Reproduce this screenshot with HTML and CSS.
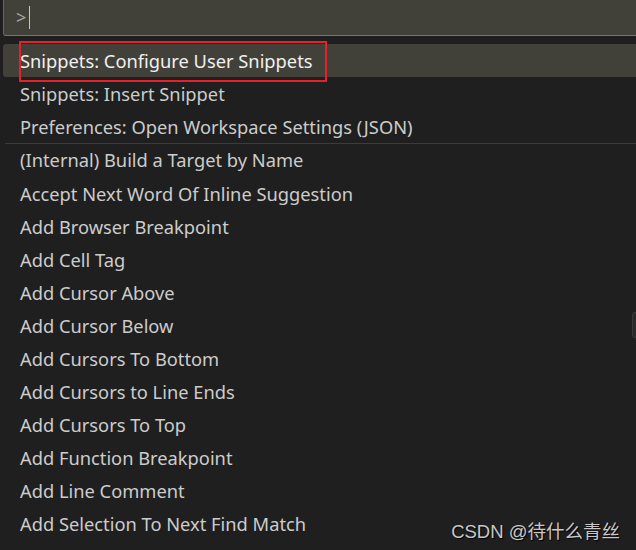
FILE: index.html
```html
<!DOCTYPE html>
<html>
<head>
<meta charset="utf-8">
<link rel="stylesheet" href="styles.css">
</head>
<body>
<div class="palette">
  <div class="input"><span class="prompt">&gt;</span><span class="caret"></span></div>
  <ul class="list">
    <li class="item active"><span class="mark">Snippets: Configure User Snippets</span></li>
    <li class="item">Snippets: Insert Snippet</li>
    <li class="item">Preferences: Open Workspace Settings (JSON)</li>
    <li class="item sep">(Internal) Build a Target by Name</li>
    <li class="item">Accept Next Word Of Inline Suggestion</li>
    <li class="item">Add Browser Breakpoint</li>
    <li class="item">Add Cell Tag</li>
    <li class="item">Add Cursor Above</li>
    <li class="item">Add Cursor Below</li>
    <li class="item">Add Cursors To Bottom</li>
    <li class="item">Add Cursors to Line Ends</li>
    <li class="item">Add Cursors To Top</li>
    <li class="item">Add Function Breakpoint</li>
    <li class="item">Add Line Comment</li>
    <li class="item">Add Selection To Next Find Match</li>
    <li class="item">Add Selection To Previous Find Match</li>
  </ul>
  <div class="scroll"></div>
</div>
<div class="watermark">CSDN @待什么青丝</div>
</body>
</html>
```
FILE: styles.css
```css
html, body {
  margin: 0;
  padding: 0;
  width: 636px;
  height: 550px;
  overflow: hidden;
  background: #1f1f1f;
  font-family: "Noto Sans", "Open Sans", sans-serif;
}
.palette {
  position: relative;
  height: 550px;
}
.input {
  margin-left: 3px;
  background: #41413a;
  border-left: 1px solid #66665c;
  border-bottom: 1px solid #76766c;
  border-bottom-left-radius: 3px;
  display: flex;
  align-items: center;
  padding-left: 12px;
  box-sizing: border-box;
  height: 36px;
}
.prompt {
  color: #a8a8a0;
  font-size: 18px;
  line-height: 22px;
  margin-top: -1px;
}
.caret {
  width: 1px;
  height: 23px;
  background: #c8c8c0;
  margin-left: 3px;
}
.list {
  list-style: none;
  margin: 8px 0 0 3px;
  padding: 0;
}
.item {
  height: 33px;
  line-height: 33px;
  padding-left: 17px;
  color: #cccccc;
  font-size: 18.3px;
  white-space: nowrap;
  box-sizing: border-box;
}
.item.active {
  background: #41413a;
  border-radius: 3px 0 0 3px;
  position: relative;
  color: #f0f0f0;
}
.mark {
  position: relative;
}
.mark::after {
  content: "";
  position: absolute;
  left: -1px;
  right: -14px;
  top: -7px;
  bottom: -9px;
  border: 2.5px solid #e8202a;
  pointer-events: none;
}
.item.sep {
  border-top: 1px solid #3c3c3c;
  height: 34px;
  line-height: 32px;
  margin-left: 2px;
  padding-left: 15px;
}
.scroll {
  position: absolute;
  right: -3px;
  top: 312px;
  width: 5px;
  height: 24px;
  border: 1px solid #3a3a3a;
  border-radius: 3px;
  background: #2a2a2a;
}
.watermark {
  position: absolute;
  right: 16px;
  top: 517px;
  font-family: "Liberation Sans", "Noto Sans CJK SC", sans-serif;
  font-size: 18.5px;
  color: #c8c8c8;
  text-shadow: 1px 1px 1px #000;
}
```
